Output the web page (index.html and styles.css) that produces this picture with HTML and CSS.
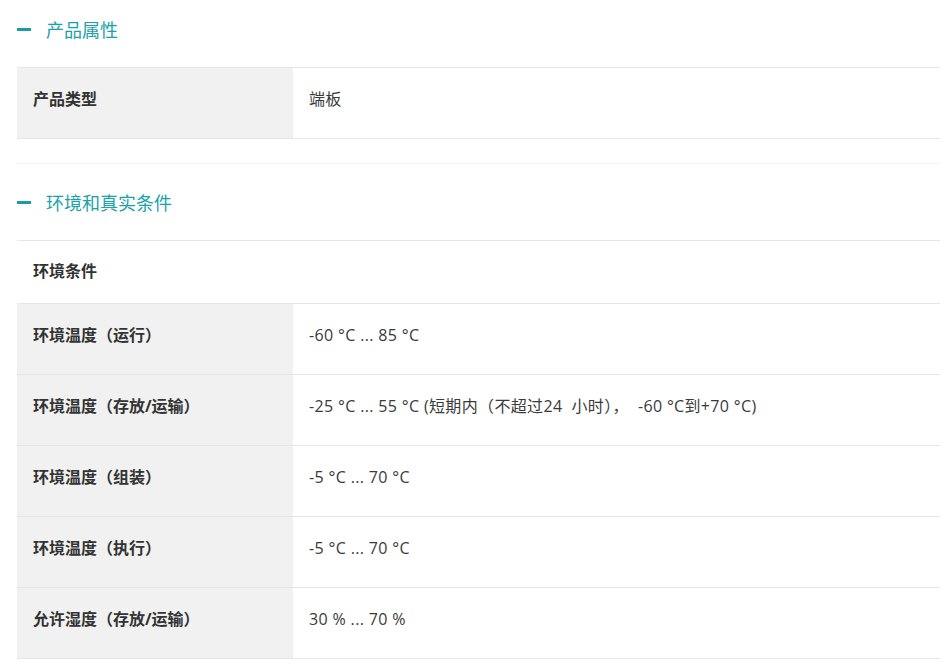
FILE: index.html
```html
<!DOCTYPE html>
<html lang="zh-CN">
<head>
    <meta charset="UTF-8">
    <meta name="viewport" content="width=device-width, initial-scale=1.0">
    <title>产品属性</title>
    <link rel="stylesheet" href="styles.css">
</head>
<body>

    <div class="specs">
        <div class="section">
            <h2 class="section-title"><span class="dash"></span>产品属性</h2>
            <table class="spec-table">
                <tr>
                    <th>产品类型</th>
                    <td>端板</td>
                </tr>
            </table>
        </div>

        <div class="section">
            <h2 class="section-title"><span class="dash"></span>环境和真实条件</h2>
            <table class="spec-table">
                <tr class="group">
                    <th colspan="2">环境条件</th>
                </tr>
                <tr>
                    <th>环境温度（运行）</th>
                    <td>-60 °C ... 85 °C</td>
                </tr>
                <tr>
                    <th>环境温度（存放/运输）</th>
                    <td>-25 °C ... 55 °C (短期内（不超过24&nbsp; 小时），&nbsp; -60 °C到+70 °C)</td>
                </tr>
                <tr>
                    <th>环境温度（组装）</th>
                    <td>-5 °C ... 70 °C</td>
                </tr>
                <tr>
                    <th>环境温度（执行）</th>
                    <td>-5 °C ... 70 °C</td>
                </tr>
                <tr>
                    <th>允许湿度（存放/运输）</th>
                    <td>30 % ... 70 %</td>
                </tr>
            </table>
        </div>
    </div>

</body>
</html>
```

FILE: styles.css
```css
body {
    margin: 0;
    background-color: #fff;
    color: #333;
    font-family: 'Open Sans', 'Noto Sans CJK SC', sans-serif;
}
.specs {
    padding: 0 10px 0 17px;
}
.section + .section {
    margin-top: 24px;
    padding-top: 9px;
    border-top: 1px solid #f4f4f4;
}
.section-title {
    display: flex;
    align-items: center;
    height: 58px;
    margin: 0 0 9px;
    font-size: 18px;
    font-weight: normal;
    color: #1aa2a8;
}
.dash {
    width: 14px;
    height: 3px;
    margin-right: 15px;
    background-color: #1a9ea4;
}
.spec-table {
    width: 100%;
    border-collapse: collapse;
    border-top: 1px solid #e5e5e5;
}
.spec-table tr {
    border-bottom: 1px solid #e5e5e5;
}
.spec-table th,
.spec-table td {
    height: 24px;
    padding: 19px 16px 27px;
    line-height: 24px;
    font-size: 16px;
    text-align: left;
    vertical-align: top;
}
.spec-table th {
    width: 276px;
    box-sizing: border-box;
    background-color: #f1f1f1;
    font-weight: bold;
}
.spec-table td {
    color: #3a3a3a;
    letter-spacing: 0.35px;
}
.spec-table .group th {
    padding: 18px 16px 20px;
    background-color: transparent;
}
```
